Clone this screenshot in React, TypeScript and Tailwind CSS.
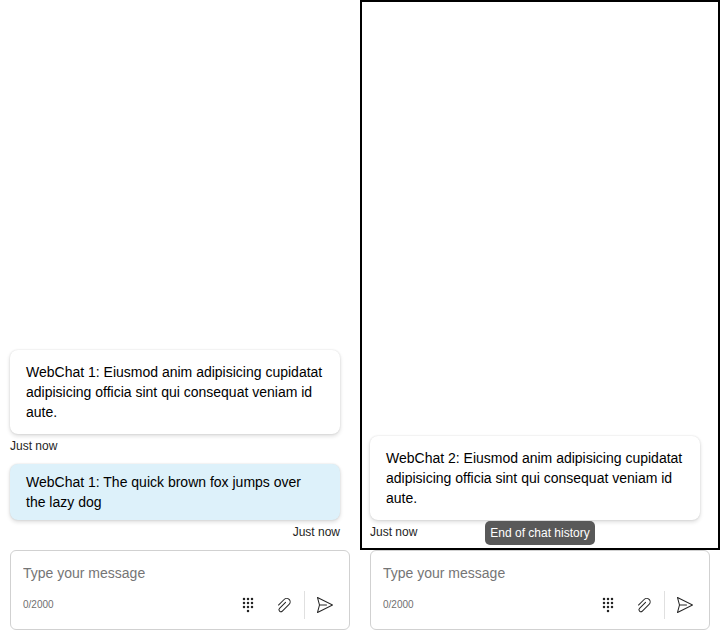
import type { ReactNode } from 'react';

function Bubble({ children, own = false }: { children: ReactNode; own?: boolean }) {
  return (
    <div
      className={`w-[330px] rounded-lg px-4 text-[14px] leading-5 text-black shadow-[0_0_2px_rgba(0,0,0,0.12),0_2px_4px_rgba(0,0,0,0.14)] ${
        own ? 'bg-[#ddf1fa] py-2' : 'bg-white py-3'
      }`}
    >
      {children}
    </div>
  );
}

function Timestamp({ right = false }: { right?: boolean }) {
  return (
    <div className={`h-[30px] w-[330px] pt-1 text-[12px] leading-4 text-[#242424] ${right ? 'text-right' : ''}`}>
      Just now
    </div>
  );
}

function KeypadIcon() {
  const dots = [
    [6, 4], [10, 4], [14, 4],
    [6, 8], [10, 8], [14, 8],
    [6, 12], [10, 12], [14, 12],
    [10, 16],
  ];
  return (
    <svg width="20" height="20" viewBox="0 0 20 20" fill="#242424">
      {dots.map(([x, y]) => (
        <circle key={`${x}-${y}`} cx={x} cy={y} r="1.25" />
      ))}
    </svg>
  );
}

function AttachIcon() {
  return (
    <svg width="20" height="20" viewBox="0 0 20 20" fill="#242424">
      <path d="m4.83 10.48 5.65-5.65a3 3 0 0 1 4.25 4.24L8 15.8a1.5 1.5 0 0 1-2.12-2.12l6-6.01a.5.5 0 1 0-.7-.71l-6 6.01a2.5 2.5 0 0 0 3.53 3.54l6.71-6.72a4 4 0 1 0-5.65-5.66L4.12 9.78a.5.5 0 0 0 .7.7Z" />
    </svg>
  );
}

function SendIcon() {
  return (
    <svg width="20" height="20" viewBox="0 0 20 20" fill="#242424">
      <path d="M2.18 2.11a.5.5 0 0 1 .54-.06l15 7.5a.5.5 0 0 1 0 .9l-15 7.5a.5.5 0 0 1-.7-.58L3.98 10 2.02 2.63a.5.5 0 0 1 .16-.52Zm2.7 8.39-1.61 6.06L16.38 10 3.27 3.44 4.88 9.5h6.62a.5.5 0 1 1 0 1H4.88Z" />
    </svg>
  );
}

function SendBox() {
  return (
    <div className="mx-[10px] flex h-20 flex-col rounded-md border border-[#d1d1d1] bg-white pl-3 pt-3">
      <textarea
        rows={1}
        placeholder="Type your message"
        className="block h-5 w-[300px] resize-none overflow-hidden text-[14px] leading-5 outline-none placeholder:text-[#757575]"
      />
      <div className="mt-2 flex h-7 items-center">
        <span className="w-[209px] text-[10px] leading-[14px] text-[#707070]">0/2000</span>
        <button className="flex size-8 items-center justify-center"><KeypadIcon /></button>
        <button className="ml-1 flex size-8 items-center justify-center"><AttachIcon /></button>
        <div className="ml-1 h-7 w-px bg-[#e0e0e0]" />
        <button className="ml-1 flex size-8 items-center justify-center"><SendIcon /></button>
      </div>
    </div>
  );
}

function Chat({ children, focused = false }: { children: ReactNode; focused?: boolean }) {
  return (
    <section className="flex h-[640px] w-[360px] flex-col">
      <div
        className={`relative flex h-[550px] flex-col justify-end border-2 pl-2 ${
          focused ? 'border-black' : 'border-transparent'
        }`}
      >
        <div className="-mb-[2px]">{children}</div>
        {focused && (
          <div className="absolute bottom-[3px] left-[123px] h-6 w-[110px] whitespace-nowrap rounded-[5px] bg-[#595959] text-center text-[12px] leading-6 text-white">
            End of chat history
          </div>
        )}
      </div>
      <SendBox />
    </section>
  );
}

export default function App() {
  return (
    <main className="flex h-[640px] w-[720px] overflow-hidden bg-white font-['Liberation_Sans',Arial,sans-serif] antialiased">
      <Chat>
        <Bubble>WebChat 1: Eiusmod anim adipisicing cupidatat adipisicing officia sint qui consequat veniam id aute.</Bubble>
        <Timestamp />
        <Bubble own>WebChat 1: The quick brown fox jumps over the lazy dog</Bubble>
        <Timestamp right />
      </Chat>
      <Chat focused>
        <Bubble>WebChat 2: Eiusmod anim adipisicing cupidatat adipisicing officia sint qui consequat veniam id aute.</Bubble>
        <Timestamp />
      </Chat>
    </main>
  );
}
